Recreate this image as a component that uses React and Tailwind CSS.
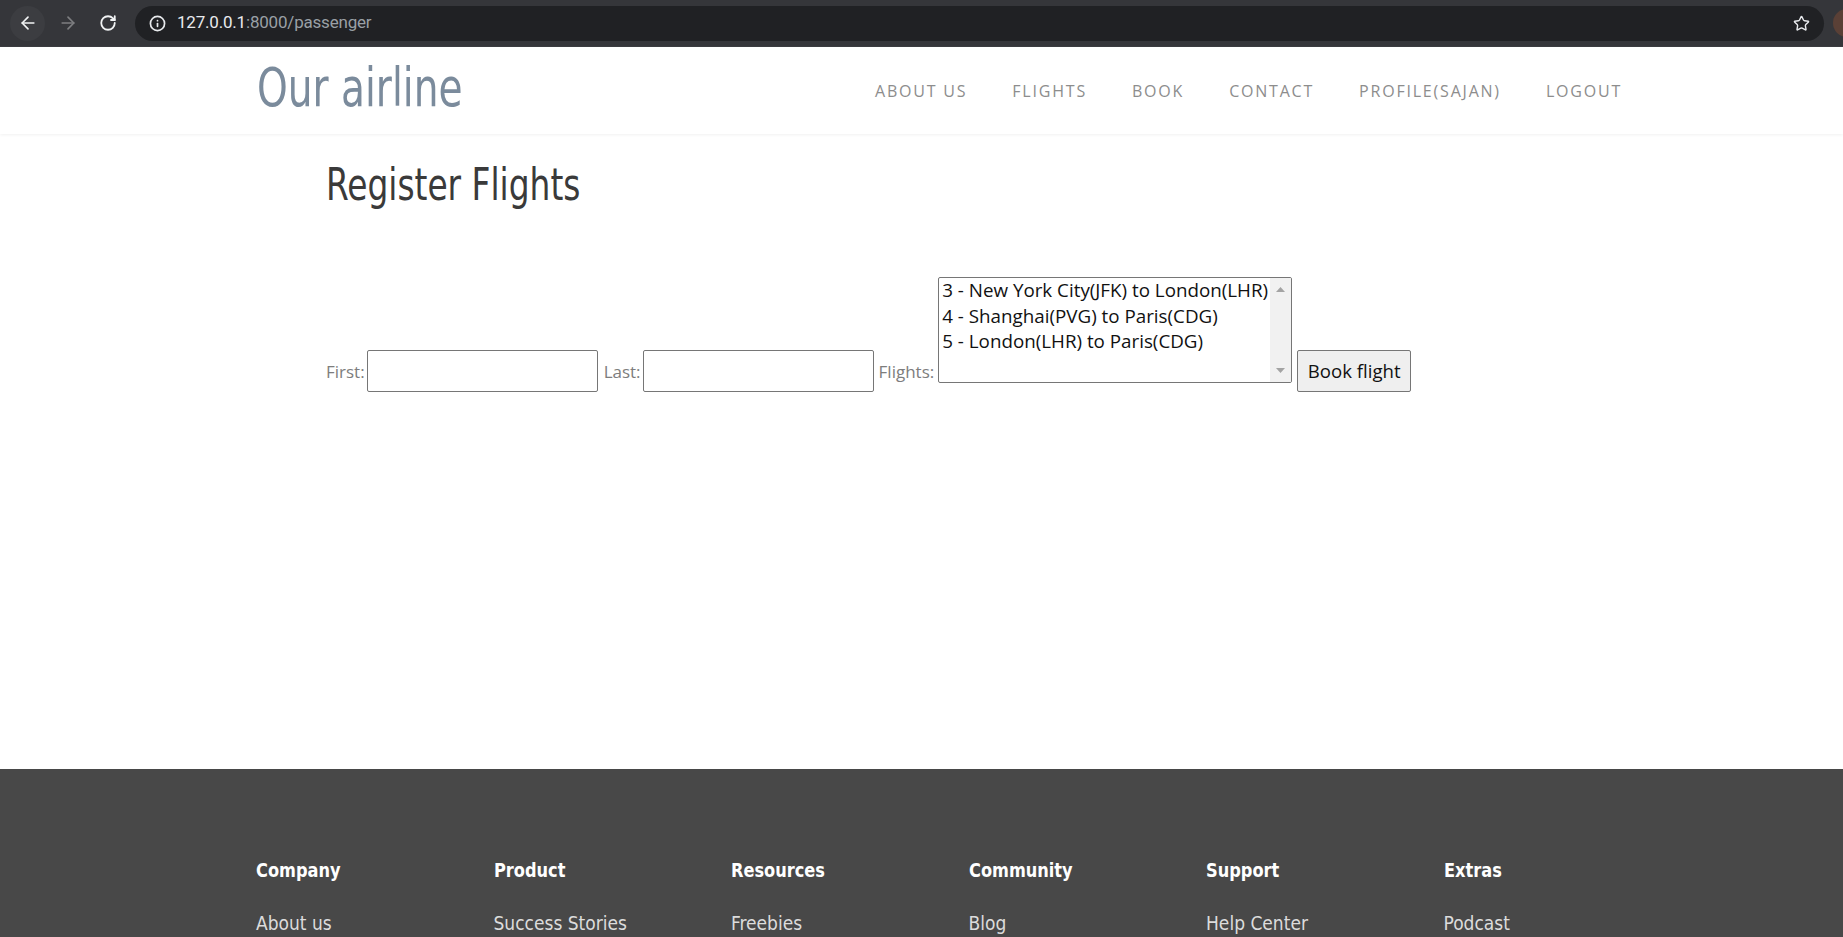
import React from "react";
import { ArrowLeft, ArrowRight, RotateCw, Info, Star } from "lucide-react";

const narrow = "font-['Liberation_Sans_Narrow','DejaVu_Sans_Condensed','Liberation_Sans',sans-serif]";

function BrowserChrome() {
  return (
    <div className="h-[47px] bg-[#35363a] flex items-center border-b border-[#3c3d41] overflow-hidden">
      <div className="shrink-0 ml-[10px] w-[35px] h-[35px] rounded-full bg-[#3c3d41] flex items-center justify-center">
        <ArrowLeft size={20} strokeWidth={2} className="text-[#f1f3f4]" />
      </div>
      <div className="shrink-0 ml-[5px] w-[35px] h-[35px] flex items-center justify-center">
        <ArrowRight size={20} strokeWidth={2} className="text-[#7d7e80]" />
      </div>
      <div className="shrink-0 ml-[5px] w-[35px] h-[35px] flex items-center justify-center">
        <RotateCw size={18} strokeWidth={2.4} className="text-[#f1f3f4]" />
      </div>
      <div className="shrink-0 ml-[10px] h-[35px] w-[1689px] rounded-full bg-[#202124] flex items-center">
        <Info size={17} strokeWidth={2.4} className="shrink-0 ml-[14px] text-[#e8eaed]" />
        <div className="ml-[11px] font-['Roboto',sans-serif] text-[17px] tracking-[-0.2px]">
          <span className="text-[#e8eaed]">127.0.0.1</span>
          <span className="text-[#9aa0a6]">:8000/passenger</span>
        </div>
        <Star size={17} strokeWidth={2} className="shrink-0 ml-auto mr-[14px] text-[#e8eaed]" />
      </div>
      <div className="shrink-0 ml-[9px] w-[28px] h-[28px] rounded-full bg-[#5a4036]" />
    </div>
  );
}

function Header() {
  const items = ["ABOUT US", "FLIGHTS", "BOOK", "CONTACT", "PROFILE(SAJAN)", "LOGOUT"];
  return (
    <header className="relative z-10 h-[87px] bg-white shadow-[0_1px_3px_rgba(0,0,0,0.06)] flex items-center pl-[257px] pr-[221px]">
      <div className={`${narrow} text-[53px] leading-none text-[#7b8b9c] mb-[7px]`}>
        <span className="inline-block origin-left scale-x-[0.82]">Our airline</span>
      </div>
      <nav className="ml-auto flex gap-[45px] font-['Open_Sans',sans-serif] text-[16px] font-medium tracking-[0.112em] text-[#8d8d8d]">
        {items.map((t) => (
          <span key={t}>{t}</span>
        ))}
      </nav>
    </header>
  );
}

function Listbox() {
  const opts = [
    "3 - New York City(JFK) to London(LHR)",
    "4 - Shanghai(PVG) to Paris(CDG)",
    "5 - London(LHR) to Paris(CDG)",
  ];
  return (
    <div className="w-[354px] h-[106px] border border-[#767676] rounded-[2px] flex bg-white overflow-hidden">
      <div className="flex-1 pl-[3px] font-['Open_Sans',sans-serif] text-[18.8px] leading-[25.5px] text-[#111] whitespace-nowrap">
        {opts.map((o) => (
          <div key={o}>{o}</div>
        ))}
      </div>
      <div className="w-[21px] bg-[#f1f1f1] flex flex-col items-center justify-between py-[9px]">
        <svg width="9" height="5" viewBox="0 0 9 5"><polygon points="0,5 9,5 4.5,0" fill="#a3a3a3" /></svg>
        <svg width="9" height="5" viewBox="0 0 9 5"><polygon points="0,0 9,0 4.5,5" fill="#a3a3a3" /></svg>
      </div>
    </div>
  );
}

function Main() {
  const label = "mt-[85px] font-['Open_Sans',sans-serif] text-[17px] leading-[20px] text-[#7d7d7d]";
  const input = "mt-[73px] w-[231px] h-[42px] border border-[#767676] rounded-[2px] bg-white";
  return (
    <main className="h-[635px] pl-[326px] pt-[29px]">
      <h1 className={`${narrow} text-[44px] leading-none text-[#3a3a3a]`}>
        <span className="inline-block origin-left scale-x-[0.83]">Register Flights</span>
      </h1>
      <div className="mt-[70px] flex items-start">
        <span className={label}>First:</span>
        <div className={`${input} ml-[2px]`} />
        <span className={`${label} ml-[6px]`}>Last:</span>
        <div className={`${input} ml-[2px]`} />
        <span className={`${label} ml-[5px]`}>Flights:</span>
        <div className="ml-[4px]">
          <Listbox />
        </div>
        <button className="mt-[73px] ml-[5px] w-[114px] h-[42px] border border-[#767676] rounded-[2px] bg-[#efefef] font-['Open_Sans',sans-serif] text-[18.6px] text-[#111]">
          Book flight
        </button>
      </div>
    </main>
  );
}

function Footer() {
  const cols = [
    ["Company", "About us"],
    ["Product", "Success Stories"],
    ["Resources", "Freebies"],
    ["Community", "Blog"],
    ["Support", "Help Center"],
    ["Extras", "Podcast"],
  ];
  return (
    <footer className="h-[168px] bg-[#484848] pl-[256px] pt-[91px] overflow-hidden">
      <div className="grid grid-cols-[repeat(6,237.5px)]">
        {cols.map(([h, l]) => (
          <div key={h} className={narrow}>
            <div className="text-[20px] leading-none font-bold text-white">
              <span className="inline-block origin-left scale-x-[0.9]">{h}</span>
            </div>
            <div className="mt-[34px] text-[19px] leading-none text-[#dcdcdc]">{l}</div>
          </div>
        ))}
      </div>
    </footer>
  );
}

export default function App() {
  return (
    <div className="w-[1843px] h-[937px] overflow-hidden bg-white">
      <BrowserChrome />
      <Header />
      <Main />
      <Footer />
    </div>
  );
}
